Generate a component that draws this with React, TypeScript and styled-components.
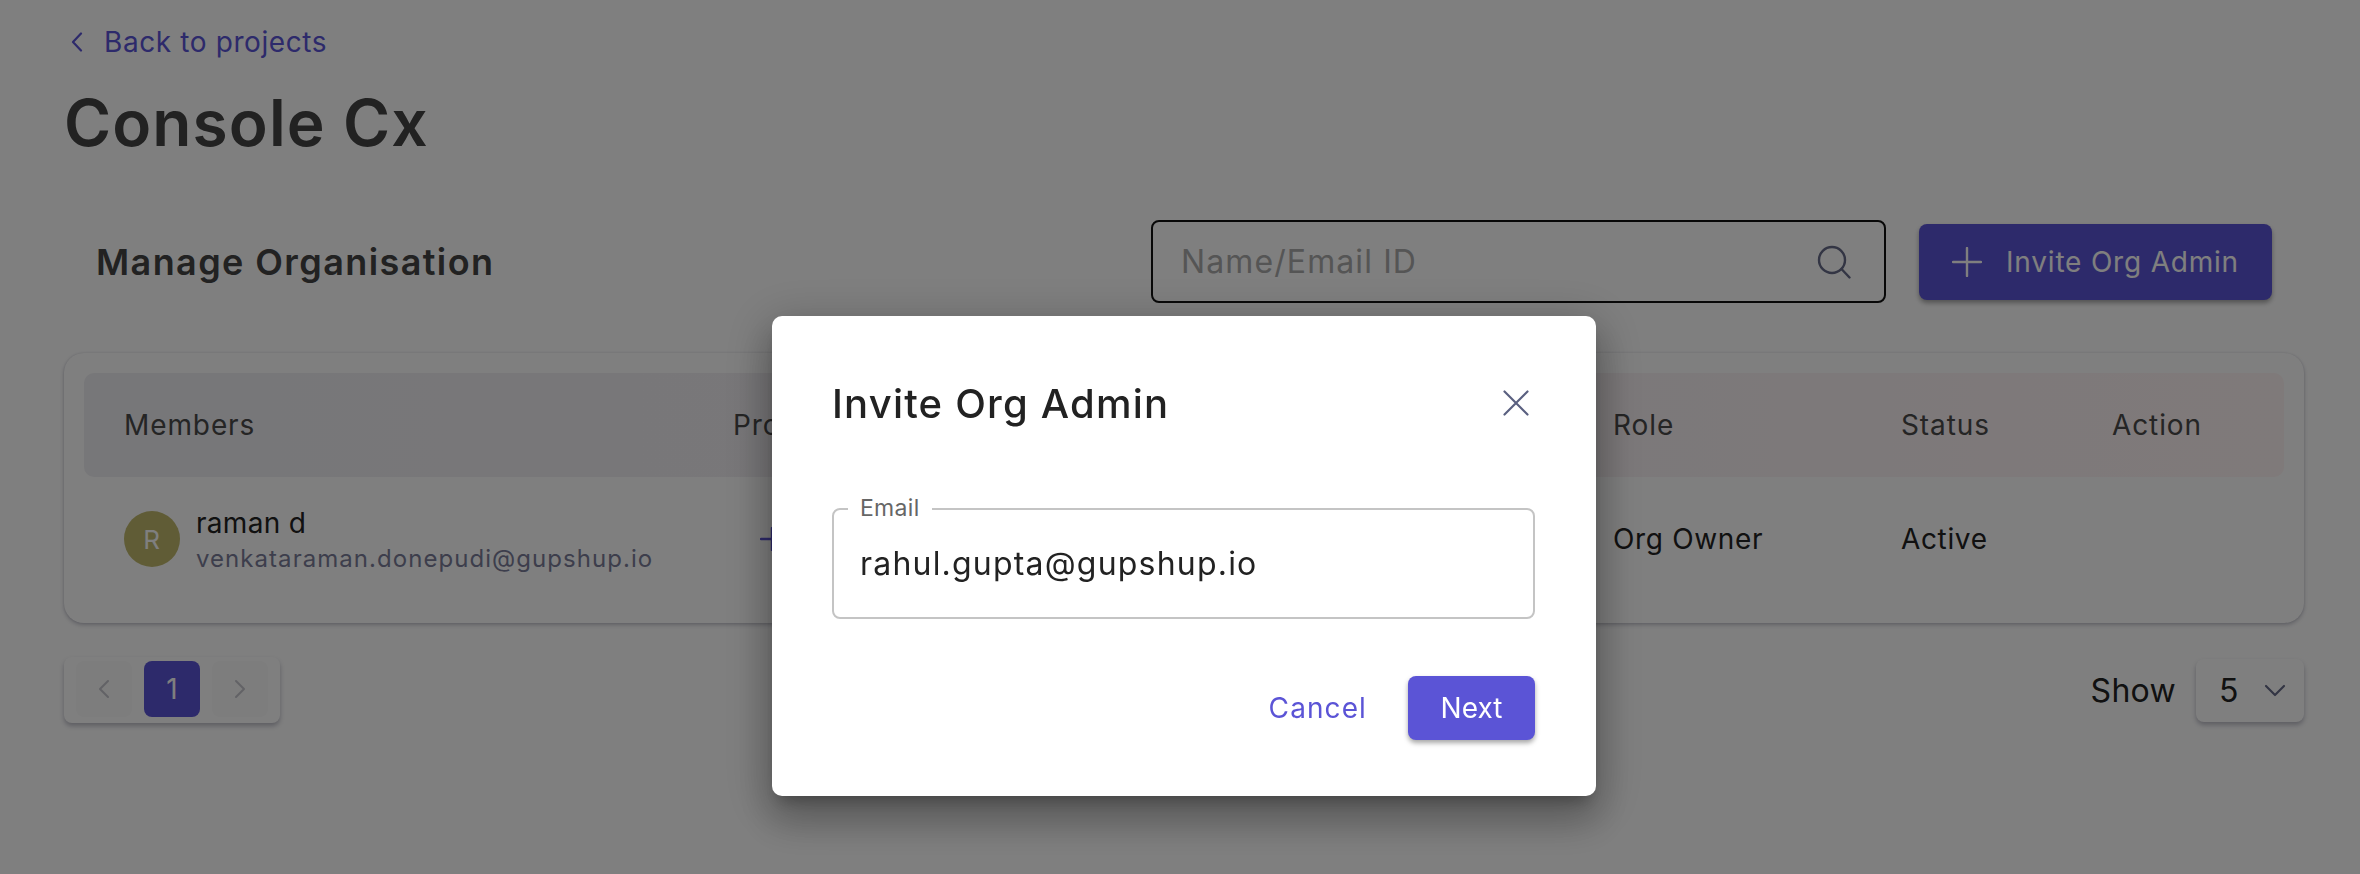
import React from 'react';
import styled, { createGlobalStyle } from 'styled-components';

const GlobalStyle = createGlobalStyle`
  html, body {
    margin: 0;
    padding: 0;
    background: #fff;
  }
  * {
    box-sizing: border-box;
  }
  body {
    font-family: Inter, "Noto Sans", "Liberation Sans", sans-serif;
  }
`;

const Page = styled.div`
  width: 2360px;
  height: 874px;
  padding: 24px 56px 0 64px;
  overflow: hidden;
  background: #fff;
`;

const BackLink = styled.a`
  display: flex;
  align-items: center;
  gap: 20px;
  height: 36px;
  padding-left: 6px;
  font-size: 28px;
  letter-spacing: 0.6px;
  color: #5b54d6;
`;

const Title = styled.h1`
  margin: 23px 0 0;
  font-size: 64px;
  line-height: 80px;
  font-weight: 600;
  letter-spacing: 1.1px;
  color: #444;
`;

const Toolbar = styled.div`
  display: flex;
  align-items: center;
  height: 83px;
  margin-top: 57px;
  padding: 0 32px;
`;

const SectionTitle = styled.h2`
  flex: 1;
  margin: 0;
  font-size: 36px;
  font-weight: 600;
  letter-spacing: 1.4px;
  color: #444;
`;

const SearchBox = styled.div`
  display: flex;
  align-items: center;
  justify-content: space-between;
  width: 735px;
  height: 83px;
  padding: 0 32px 0 28px;
  border: 2px solid #111;
  border-radius: 8px;
  font-size: 32px;
  letter-spacing: 1.1px;
  color: #aaa;
`;

const PrimaryButton = styled.button`
  display: flex;
  align-items: center;
  justify-content: center;
  border: 0;
  border-radius: 8px;
  background: #5b54d6;
  color: #fff;
  font-family: inherit;
  font-size: 28px;
  box-shadow: 0 3px 5px rgba(0, 0, 0, 0.35);
`;

const InviteButton = styled(PrimaryButton)`
  gap: 24px;
  width: 353px;
  height: 76px;
  margin-left: 33px;
  letter-spacing: 0.8px;
`;

const Card = styled.div`
  height: 270px;
  margin-top: 50px;
  padding: 20px;
  border-radius: 20px;
  background: #fff;
  box-shadow: 0 2px 4px rgba(60, 60, 90, 0.3), 0 0 2px rgba(60, 60, 90, 0.15);
`;

const Columns = styled.div`
  display: grid;
  grid-template-columns: 609px 880px 288px 211px 1fr;
  align-items: center;
  padding-left: 40px;
`;

const HeadRow = styled(Columns)`
  height: 104px;
  border-radius: 10px;
  background: linear-gradient(90deg, #eeeef2, #f4f0f4 50%, #fff4f4);
  font-size: 28px;
  letter-spacing: 0.9px;
  color: #4a4a4a;
`;

const BodyRow = styled(Columns)`
  height: 126px;
  padding-bottom: 2px;
  font-size: 28px;
  letter-spacing: 0.65px;
  color: #222;
`;

const Member = styled.div`
  display: flex;
  align-items: center;
  gap: 16px;
`;

const Avatar = styled.div`
  display: flex;
  align-items: center;
  justify-content: center;
  width: 56px;
  height: 56px;
  border-radius: 50%;
  background: #bdb566;
  color: #fff;
  font-size: 26px;
  opacity: 0.95;
`;

const MemberText = styled.div`
  display: flex;
  flex-direction: column;
  gap: 2px;
  padding-top: 4px;
`;

const MemberName = styled.span`
  font-size: 28px;
  line-height: 34px;
  letter-spacing: 0.3px;
  color: #222;
`;

const MemberEmail = styled.span`
  font-size: 24px;
  line-height: 34px;
  letter-spacing: 1.05px;
  color: #7a7d99;
`;

const AddProject = styled.div`
  display: flex;
  padding-left: 27px;
  color: #5b54d6;
`;

const Footer = styled.div`
  display: flex;
  align-items: center;
  justify-content: space-between;
  margin-top: 34px;
`;

const Pager = styled.div`
  display: flex;
  gap: 12px;
  padding: 4px 12px 6px;
  border-radius: 8px;
  background: #fff;
  box-shadow: 0 3px 5px rgba(60, 60, 90, 0.35);
`;

const PageButton = styled.div<{ $active?: boolean }>`
  display: flex;
  align-items: center;
  justify-content: center;
  width: 56px;
  height: 56px;
  border-radius: 8px;
  background: ${(props) => (props.$active ? '#5b54d6' : '#fafafa')};
  color: ${(props) => (props.$active ? '#fff' : '#c4c4cc')};
  font-size: 28px;
`;

const ShowBlock = styled.div`
  display: flex;
  align-items: center;
  gap: 20px;
  font-size: 32px;
  letter-spacing: 0.3px;
  color: #222;
`;

const SelectBox = styled.div`
  display: flex;
  align-items: center;
  justify-content: space-between;
  width: 108px;
  height: 63px;
  padding: 0 18px 0 23px;
  border-radius: 8px;
  background: #fff;
  box-shadow: 0 3px 5px rgba(60, 60, 90, 0.35);
`;

const Overlay = styled.div`
  position: fixed;
  inset: 0;
  padding: 316px 0 0 772px;
  background: rgba(0, 0, 0, 0.5);
`;

const Modal = styled.div`
  width: 824px;
  height: 480px;
  padding: 58px 61px 0 60px;
  border-radius: 10px;
  background: #fff;
  box-shadow: 0 11px 15px -7px rgba(0, 0, 0, 0.25), 0 24px 38px 3px rgba(0, 0, 0, 0.2),
    0 9px 46px 8px rgba(0, 0, 0, 0.18);
`;

const ModalHead = styled.div`
  display: flex;
  align-items: center;
  justify-content: space-between;
  height: 58px;
  padding-right: 6px;
`;

const ModalTitle = styled.h3`
  margin: 0;
  font-size: 40px;
  font-weight: 500;
  letter-spacing: 1.2px;
  color: #222;
`;

const Field = styled.div`
  position: relative;
  display: flex;
  align-items: center;
  height: 111px;
  margin-top: 76px;
  padding: 0 26px;
  border: 2px solid #c4c4c4;
  border-radius: 8px;
  font-size: 32px;
  letter-spacing: 1.2px;
  color: #222;
`;

const FieldLabel = styled.span`
  position: absolute;
  top: -16px;
  left: 14px;
  padding: 0 12px;
  background: #fff;
  font-size: 23px;
  line-height: 28px;
  letter-spacing: 0.3px;
  color: #666;
`;

const ModalActions = styled.div`
  display: flex;
  align-items: center;
  justify-content: flex-end;
  gap: 41px;
  margin-top: 57px;
`;

const CancelLink = styled.span`
  font-size: 28px;
  letter-spacing: 1.1px;
  color: #5b54d6;
`;

const NextButton = styled(PrimaryButton)`
  width: 127px;
  height: 64px;
`;

const Icon = styled.svg<{ $color?: string }>`
  flex: none;
  fill: none;
  stroke: ${(props) => props.$color || 'currentColor'};
  stroke-linecap: round;
  stroke-linejoin: round;
`;

const App: React.FC = () => {
  return (
    <>
      <GlobalStyle />
      <Page>
        <BackLink>
          <Icon width="14" height="20" viewBox="0 0 14 20" strokeWidth="2.2">
            <path d="M11 1.5 3 10l8 8.5" />
          </Icon>
          Back to projects
        </BackLink>
        <Title>Console Cx</Title>
        <Toolbar>
          <SectionTitle>Manage Organisation</SectionTitle>
          <SearchBox>
            Name/Email ID
            <Icon width="36" height="34" viewBox="0 0 36 34" strokeWidth="2.4" $color="#666b88">
              <circle cx="16" cy="15" r="13" />
              <path d="m25.5 24 8 8.5" />
            </Icon>
          </SearchBox>
          <InviteButton>
            <Icon width="30" height="30" viewBox="0 0 30 30" strokeWidth="2.4">
              <path d="M15 1v28M1 15h28" />
            </Icon>
            Invite Org Admin
          </InviteButton>
        </Toolbar>
        <Card>
          <HeadRow>
            <span>Members</span>
            <span>Projects</span>
            <span>Role</span>
            <span>Status</span>
            <span>Action</span>
          </HeadRow>
          <BodyRow>
            <Member>
              <Avatar>R</Avatar>
              <MemberText>
                <MemberName>raman d</MemberName>
                <MemberEmail>venkataraman.donepudi@gupshup.io</MemberEmail>
              </MemberText>
            </Member>
            <AddProject>
              <Icon width="24" height="24" viewBox="0 0 24 24" strokeWidth="2.4">
                <path d="M12 1v22M1 12h22" />
              </Icon>
            </AddProject>
            <span>Org Owner</span>
            <span>Active</span>
            <span />
          </BodyRow>
        </Card>
        <Footer>
          <Pager>
            <PageButton>
              <Icon width="12" height="20" viewBox="0 0 12 20" strokeWidth="2">
                <path d="M10 2 2 10l8 8" />
              </Icon>
            </PageButton>
            <PageButton $active>1</PageButton>
            <PageButton>
              <Icon width="12" height="20" viewBox="0 0 12 20" strokeWidth="2">
                <path d="m2 2 8 8-8 8" />
              </Icon>
            </PageButton>
          </Pager>
          <ShowBlock>
            Show
            <SelectBox>
              5
              <Icon width="22" height="13" viewBox="0 0 22 13" strokeWidth="2.2" $color="#666b88">
                <path d="m2 2 9 9 9-9" />
              </Icon>
            </SelectBox>
          </ShowBlock>
        </Footer>
      </Page>
      <Overlay>
        <Modal>
          <ModalHead>
            <ModalTitle>Invite Org Admin</ModalTitle>
            <Icon width="26" height="26" viewBox="0 0 26 26" strokeWidth="2.2" $color="#5a6080">
              <path d="M1.5 1.5 24.5 24.5M24.5 1.5 1.5 24.5" />
            </Icon>
          </ModalHead>
          <Field>
            <FieldLabel>Email</FieldLabel>
            rahul.gupta@gupshup.io
          </Field>
          <ModalActions>
            <CancelLink>Cancel</CancelLink>
            <NextButton>Next</NextButton>
          </ModalActions>
        </Modal>
      </Overlay>
    </>
  );
};

export default App;
